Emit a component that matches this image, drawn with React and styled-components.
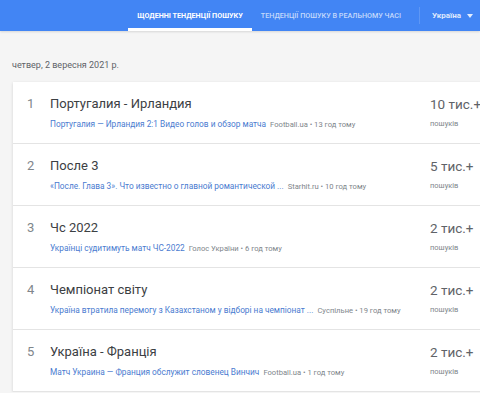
import styled, { createGlobalStyle } from 'styled-components'

const GlobalStyle = createGlobalStyle`
  html, body {
    margin: 0;
    padding: 0;
    background: #f5f5f5;
    overflow: hidden;
  }
  body {
    font-family: Roboto, "Noto Sans", "Liberation Sans", sans-serif;
  }
`

const trends = [
  {
    rank: 1,
    title: 'Португалия - Ирландия',
    article: 'Португалия — Ирландия 2:1 Видео голов и обзор матча',
    source: 'Football.ua • 13 год тому',
    count: '10 тис.+',
  },
  {
    rank: 2,
    title: 'После 3',
    article: '«После. Глава 3». Что известно о главной романтической ...',
    source: 'Starhit.ru • 10 год тому',
    count: '5 тис.+',
  },
  {
    rank: 3,
    title: 'Чс 2022',
    article: 'Українці судитимуть матч ЧС-2022',
    source: 'Голос України • 6 год тому',
    count: '2 тис.+',
  },
  {
    rank: 4,
    title: 'Чемпіонат світу',
    article: 'Україна втратила перемогу з Казахстаном у відборі на чемпіонат ...',
    source: 'Суспільне • 19 год тому',
    count: '2 тис.+',
  },
  {
    rank: 5,
    title: 'Україна - Франція',
    article: 'Матч Украина — Франция обслужит словенец Винчич',
    source: 'Football.ua • 1 год тому',
    count: '2 тис.+',
  },
]

const Header = styled.header`
  height: 31px;
  background: #4285f4;
  display: flex;
  justify-content: flex-end;
  align-items: stretch;
  padding-right: 7px;
  box-shadow: 0 1px 2px rgba(0, 0, 0, 0.12);
`

const Tab = styled.div`
  display: flex;
  align-items: center;
  padding: 3px 9px 0;
  font-size: 7.2px;
  font-weight: ${({ active }) => (active ? 700 : 500)};
  text-transform: uppercase;
  color: ${({ active }) => (active ? '#ffffff' : 'rgba(255, 255, 255, 0.7)')};
  border-bottom: 3px solid ${({ active }) => (active ? '#ffffff' : 'transparent')};
  white-space: nowrap;
`

const Divider = styled.div`
  width: 1px;
  margin: 7px 12px 7px 9px;
  background: rgba(255, 255, 255, 0.15);
`

const Country = styled.div`
  display: flex;
  align-items: center;
  gap: 6px;
  font-size: 8px;
  font-weight: 700;
  color: rgba(255, 255, 255, 0.85);
`

const Caret = styled.span`
  width: 0;
  height: 0;
  border-left: 3px solid transparent;
  border-right: 3px solid transparent;
  border-top: 4px solid rgba(255, 255, 255, 0.85);
`

const Main = styled.main`
  padding: 28px 0 0 13px;
`

const DateLine = styled.div`
  font-size: 9px;
  color: #5f6368;
  margin: 0 0 11px -1px;
  line-height: 12px;
`

const Card = styled.section`
  width: 500px;
  background: #ffffff;
  box-shadow: 0 1px 3px rgba(0, 0, 0, 0.14);
`

const Row = styled.div`
  display: grid;
  grid-template-columns: 37px 1fr 83px;
  height: 62px;
  box-sizing: border-box;
  padding-top: 14px;
  border-bottom: 1px solid #e4e4e4;
`

const Rank = styled.div`
  font-size: 13px;
  line-height: 16px;
  color: #80868b;
  padding-left: 14px;
`

const Body = styled.div`
  display: flex;
  flex-direction: column;
  gap: 6px;
  min-width: 0;
`

const Title = styled.div`
  font-size: 13px;
  line-height: 16px;
  color: #3c4043;
`

const Meta = styled.div`
  font-size: 8.3px;
  line-height: 12px;
  white-space: nowrap;
`

const Article = styled.span`
  color: #4a7bd0;
  margin-right: 4px;
`

const Source = styled.span`
  color: #80868b;
  font-size: 7.6px;
`

const Stats = styled.div`
  display: flex;
  flex-direction: column;
  gap: 6px;
`

const Count = styled.div`
  font-size: 13.5px;
  line-height: 18px;
  margin-top: -1px;
  color: #5f6368;
`

const Label = styled.div`
  font-size: 7.5px;
  line-height: 10px;
  color: #80868b;
`

export default function App() {
  return (
    <>
      <GlobalStyle />
      <Header>
        <Tab active>Щоденні тенденції пошуку</Tab>
        <Tab>Тенденції пошуку в реальному часі</Tab>
        <Divider />
        <Country>
          Україна <Caret />
        </Country>
      </Header>
      <Main>
        <DateLine>четвер, 2 вересня 2021 р.</DateLine>
        <Card>
          {trends.map((t) => (
            <Row key={t.rank}>
              <Rank>{t.rank}</Rank>
              <Body>
                <Title>{t.title}</Title>
                <Meta>
                  <Article>{t.article}</Article>
                  <Source>{t.source}</Source>
                </Meta>
              </Body>
              <Stats>
                <Count>{t.count}</Count>
                <Label>пошуків</Label>
              </Stats>
            </Row>
          ))}
        </Card>
      </Main>
    </>
  )
}
